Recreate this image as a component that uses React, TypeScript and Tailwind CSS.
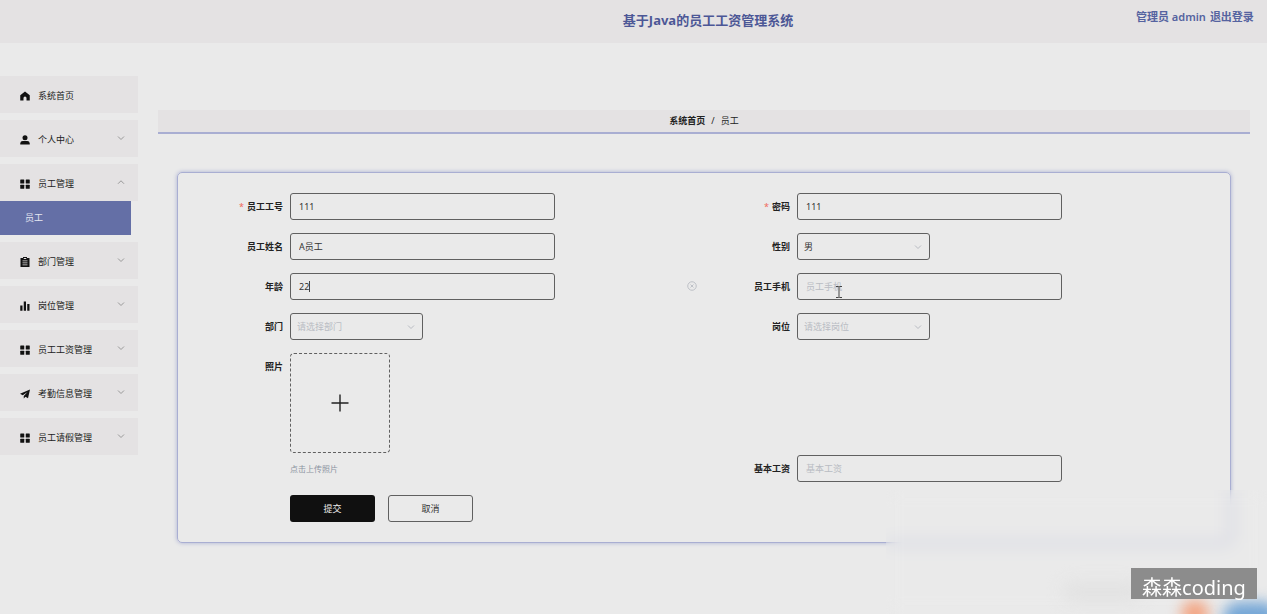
import { useState, type ReactNode } from "react";

const IconHome = () => (
  <svg viewBox="0 0 20 20" className="size-2.5 shrink-0" fill="currentColor" aria-hidden="true">
    <path d="M10 1 0.500 8.500V19H7v-5a3 3 0 0 1 6 0v5h6.500V8.500z" />
  </svg>
);

const IconUser = () => (
  <svg viewBox="0 0 20 20" className="size-2.5 shrink-0" fill="currentColor" aria-hidden="true">
    <circle cx="10" cy="5.5" r="5" />
    <path d="M0.500 19v-2.500a5 5 0 0 1 5-4.500h9a5 5 0 0 1 5 4.500V19z" />
  </svg>
);

const IconGrid = () => (
  <svg viewBox="0 0 20 20" className="size-2.5 shrink-0" fill="currentColor" aria-hidden="true">
    <rect x="0.5" y="1" width="8" height="8" rx="1" />
    <rect x="11.500" y="1" width="8" height="8" rx="1" />
    <rect x="0.5" y="11.500" width="8" height="8" rx="1" />
    <rect x="11.500" y="11.500" width="8" height="8" rx="1" />
  </svg>
);

const IconOrder = () => (
  <svg viewBox="0 0 20 20" className="size-2.5 shrink-0" fill="currentColor" aria-hidden="true">
    <path
      fillRule="evenodd"
      d="M6 0h8v2h5v18H1V2h5zM7.500 2v2h5V2zM5 7v1.500h10V7zM5 11v1.500h10V11zM5 15v1.500h10V15z"
    />
  </svg>
);

const IconBars = () => (
  <svg viewBox="0 0 20 20" className="size-2.5 shrink-0" fill="currentColor" aria-hidden="true">
    <rect x="0.500" y="9" width="4.500" height="10.500" />
    <rect x="7.500" y="1" width="4.500" height="18.500" />
    <rect x="14.500" y="6" width="4.500" height="13.500" />
  </svg>
);

const IconPlane = () => (
  <svg viewBox="0 0 20 20" className="size-2.5 shrink-0" fill="currentColor" aria-hidden="true">
    <path d="M20 1 0 9.500l5.500 3L15 6l-7.500 8v5l3.500-3.500 5 3z" />
  </svg>
);

const Chevron = ({ up = false, className = "" }: { up?: boolean; className?: string }) => (
  <svg
    viewBox="0 0 16 16"
    className={className}
    fill="none"
    stroke="currentColor"
    strokeWidth="2"
    aria-hidden="true"
  >
    <path d={up ? "M2 11.500 8 5.500l6 6" : "M2 5l6 6 6-6"} />
  </svg>
);

type MenuEntry = { label: string; icon: () => ReactNode; children?: string[]; leaf?: boolean };

const menu: MenuEntry[] = [
  { label: "系统首页", icon: IconHome, leaf: true },
  { label: "个人中心", icon: IconUser },
  { label: "员工管理", icon: IconGrid, children: ["员工"] },
  { label: "部门管理", icon: IconOrder },
  { label: "岗位管理", icon: IconBars },
  { label: "员工工资管理", icon: IconGrid },
  { label: "考勤信息管理", icon: IconPlane },
  { label: "员工请假管理", icon: IconGrid },
];

function Sidebar() {
  return (
    <nav className="flex w-[138px] shrink-0 flex-col gap-[7px] pt-[33px]">
      {menu.map(({ label, icon: Icon, children, leaf }) => (
        <div key={label}>
          <button
            type="button"
            className="flex h-[37px] w-full items-center bg-[#e4e2e3] pt-0.5 pr-[13px] pl-5 text-[9px] text-[#222]"
          >
            <span className="flex text-[#111]">
              <Icon />
            </span>
            <span className="ml-2 flex-1 text-left">{label}</span>
            {!leaf && <Chevron up={!!children} className="mb-1 size-2 text-[#999]" />}
          </button>
          {children?.map((child) => (
            <a
              key={child}
              href="#staff"
              className="mr-[7px] flex h-[34px] items-center bg-[#646fa6] pl-[25px] text-[9px] text-[#e6e8f2]"
            >
              {child}
            </a>
          ))}
        </div>
      ))}
    </nav>
  );
}

const box = "block h-[27px] rounded-[3px] border border-[#606060] bg-transparent text-[9px] outline-none";

function Field({
  id,
  label,
  required = false,
  children,
}: {
  id: string;
  label: string;
  required?: boolean;
  children: ReactNode;
}) {
  return (
    <div className="flex">
      <label
        htmlFor={id}
        className="h-[27px] w-[93px] shrink-0 pr-[7px] text-right text-[9px] leading-[27px] font-bold text-[#222]"
      >
        {required && <span className="mr-[3px] font-normal text-[#f0685c]">*</span>}
        {label}
      </label>
      <div className="relative flex-1">{children}</div>
    </div>
  );
}

function TextField({
  id,
  label,
  required,
  initial = "",
  children,
}: {
  id: string;
  label: string;
  required?: boolean;
  initial?: string;
  children?: ReactNode;
}) {
  const [value, setValue] = useState(initial);
  return (
    <Field id={id} label={label} required={required}>
      <input
        id={id}
        value={value}
        placeholder={label}
        onChange={(e) => setValue(e.target.value)}
        className={`${box} w-[265px] px-2 text-[#333] placeholder:text-[#b9bcc3]`}
      />
      {children}
    </Field>
  );
}

function SelectField({ id, label, options, empty }: { id: string; label: string; options: string[]; empty?: boolean }) {
  return (
    <Field id={id} label={label}>
      <div className="relative w-[133px]">
        <select
          id={id}
          className={`${box} w-full appearance-none pr-6 pl-1.5 ${empty ? "text-[#b9bcc3]" : "text-[#333]"}`}
        >
          {options.map((o) => (
            <option key={o}>{o}</option>
          ))}
        </select>
        <Chevron className="pointer-events-none absolute top-2.5 right-2 size-2 text-[#b9bcc3]" />
      </div>
    </Field>
  );
}

function StaffForm() {
  return (
    <form
      onSubmit={(e) => e.preventDefault()}
      className="mx-[19px] mt-[38px] rounded-[5px] border border-[#a9aed2] px-[19px] py-5 shadow-[0_0_4px_#a9aed2]"
    >
      <div className="grid grid-cols-2 gap-y-[13px]">
        <TextField id="no" label="员工工号" required initial="111" />
        <TextField id="password" label="密码" required initial="111" />
        <TextField id="name" label="员工姓名" initial="A员工" />
        <SelectField id="gender" label="性别" options={["男", "女"]} />
        <TextField id="age" label="年龄" initial="22">
          <span className="absolute top-2 left-[19px] h-[11px] w-px bg-[#444]" />
          <svg
            viewBox="0 0 20 20"
            className="absolute top-2 right-[7px] size-2.5 text-[#b9bcc3]"
            fill="none"
            stroke="currentColor"
            strokeWidth="1.800"
            aria-hidden="true"
          >
            <circle cx="10" cy="10" r="8.500" />
            <path d="m7 7 6 6m0-6-6 6" />
          </svg>
        </TextField>
        <TextField id="phone" label="员工手机">
          <svg
            viewBox="0 0 8 14"
            className="pointer-events-none absolute top-3 left-[38px] h-3.5 w-2"
            fill="none"
            stroke="#444"
            aria-hidden="true"
          >
            <path d="M1 1.500h2.500L4 2l.5-.5H7M4 2v10M1 12.500h2.500L4 12l.5.5H7" />
          </svg>
        </TextField>
        <SelectField id="dept" label="部门" options={["请选择部门"]} empty />
        <SelectField id="post" label="岗位" options={["请选择岗位"]} empty />
        <Field id="photo" label="照片">
          <button
            id="photo"
            type="button"
            aria-label="点击上传照片"
            className="flex size-[100px] items-center justify-center rounded-[4px] border border-dashed border-[#606060]"
          >
            <svg viewBox="0 0 18 18" className="size-[18px]" stroke="#222" strokeWidth="1.400" aria-hidden="true">
              <path d="M9 0.500v17M0.500 9h17" />
            </svg>
          </button>
          <p className="pt-[3px] text-[8px] leading-[26px] text-[#8b93a1]">点击上传照片</p>
        </Field>
        <div className="self-end">
          <TextField id="salary" label="基本工资" />
        </div>
      </div>
      <div className="mt-[13px] ml-[93px] flex gap-[13px]">
        <button type="submit" className="h-[27px] w-[85px] rounded-[3px] bg-[#101010] text-[9px] text-[#eee]">
          提交
        </button>
        <button
          type="button"
          className="h-[27px] w-[85px] rounded-[3px] border border-[#606060] text-[9px] text-[#333]"
        >
          取消
        </button>
      </div>
    </form>
  );
}

export default function App() {
  return (
    <div className="relative min-h-screen overflow-hidden bg-[#eaeaea] font-['Noto_Sans','Noto_Sans_CJK_SC',sans-serif]">
      <header className="flex h-[43px] bg-[#e4e2e3] font-bold text-[#4c5796]">
        <div className="w-[280px] shrink-0" />
        <h1 className="flex-1 pt-2.5 text-center text-[13px] leading-5">基于Java的员工工资管理系统</h1>
        <div className="flex w-[131px] shrink-0 gap-1 pt-[9px] text-[11px] leading-4 font-semibold whitespace-nowrap text-[#5563a0]">
          <span>管理员 admin</span>
          <a href="#logout">退出登录</a>
        </div>
      </header>
      <div className="flex">
        <Sidebar />
        <main className="min-w-0 flex-1 pt-[67px] pr-[17px] pl-5">
          <div className="flex h-6 items-center justify-center gap-1.5 border-b-2 border-[#a9aed2] bg-[#e4e2e3] text-[9px] text-[#222]">
            <a href="#home" className="font-bold">
              系统首页
            </a>
            <span>/</span>
            <span>员工</span>
          </div>
          <StaffForm />
        </main>
      </div>
      <div className="pointer-events-none absolute top-[490px] right-0 bottom-0 w-[381px] overflow-hidden">
        <div className="absolute inset-0 backdrop-blur-[8px]" />
        <div className="absolute right-[125px] bottom-3 h-5 w-[80px] rounded-full bg-[#e2e2e2] blur-[8px]" />
        <div className="absolute right-[58px] -bottom-3.5 size-7 rounded-full bg-[#f3a583] blur-[7px]" />
        <div className="absolute -right-3 -bottom-5 h-8 w-14 rounded-full bg-[#74a6d6] blur-[7px]" />
        <div className="absolute right-2.5 bottom-[15px] flex h-[31px] w-[126px] items-center justify-center bg-[#8c8c8c] pt-2 text-[20px] leading-none whitespace-nowrap text-white">
          森森coding
        </div>
      </div>
    </div>
  );
}
